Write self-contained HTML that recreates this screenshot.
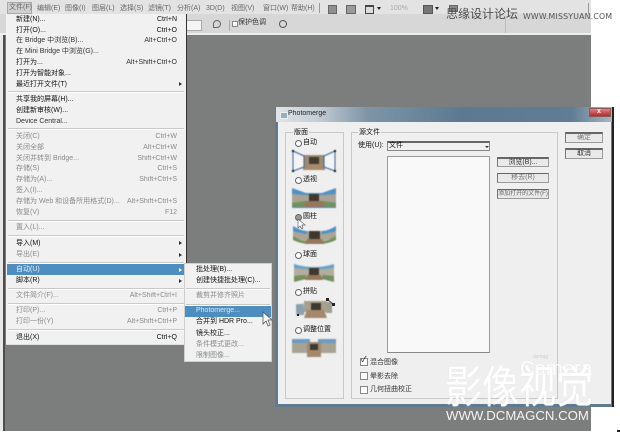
<!DOCTYPE html>
<html><head><meta charset="utf-8">
<style>
html,body{margin:0;padding:0;background:#fff}
#r{position:relative;width:620px;height:433px;overflow:hidden;background:#fff;font-family:"Liberation Sans","Noto Sans CJK SC",sans-serif;font-size:7px;color:#333}
#r div,#r span{position:absolute;white-space:nowrap}
.t{line-height:10px;height:10px;filter:blur(.35px)}
.k{text-align:right;width:90px;line-height:10px;height:10px;filter:blur(.35px)}
.g{color:#8a8a8a}
.b{color:#111}
.s{height:1px;background:#c9c9c9;border-bottom:1px solid #fff}
.m{color:#666;font-size:7px;line-height:10px;top:4px;filter:blur(.35px)}
.a{width:0;height:0;border-left:3px solid #333;border-top:2px solid transparent;border-bottom:2px solid transparent}
.r{width:5px;height:5px;border-radius:50%;border:1px solid #666;background:#fff}
.c{width:6px;height:6px;border:1px solid #888;background:#fff}
.p{border:1px solid #c8c8c8;background:#efeff0}
.bt{background:#e9e9e9;border:1px solid #9a9a9a;border-top:2px solid #666;border-left-color:#777;text-align:center;color:#555;line-height:8px;font-size:7px;box-sizing:border-box;filter:blur(.25px)}
.th{filter:blur(.4px)}
</style></head><body><div id="r">

<!-- app chrome -->
<div style="left:0;top:0;width:591px;height:431px;background:#7c7d7d"></div>
<div style="left:0;top:0;width:591px;height:14px;background:#e3e3e3"></div>
<div style="left:0;top:14px;width:591px;height:19px;background:#d7d7d7"></div>
<div style="left:0;top:33px;width:591px;height:2px;background:#eeeeee"></div>
<div style="left:0;top:35px;width:3px;height:396px;background:#e8e8e8"></div>
<div style="left:3px;top:35px;width:2px;height:396px;background:#4d4d4d"></div>

<div style="left:7px;top:2px;width:23px;height:10px;background:#d0d0d0;border:1px solid #a8a8a8"></div>
<span class="m" style="left:9px;top:3px">文件(F)</span>
<span class="m" style="left:37px">编辑(E)</span>
<span class="m" style="left:65px">图像(I)</span>
<span class="m" style="left:92px">图层(L)</span>
<span class="m" style="left:120px">选择(S)</span>
<span class="m" style="left:148px">滤镜(T)</span>
<span class="m" style="left:177px">分析(A)</span>
<span class="m" style="left:206px">3D(D)</span>
<span class="m" style="left:231px">视图(V)</span>
<span class="m" style="left:263px">窗口(W)</span>
<span class="m" style="left:291px">帮助(H)</span>

<div style="left:319px;top:3px;width:1px;height:10px;background:#999"></div>
<div style="left:328px;top:5px;width:7px;height:7px;background:#8f8f8f;border:1px solid #666"></div>
<div style="left:346px;top:5px;width:8px;height:7px;background:#9a9a9a;border:1px solid #666"></div>
<div style="left:365px;top:5px;width:7px;height:6px;background:#ddd;border:1px solid #444;border-top:2px solid #444"></div>
<div class="a" style="left:377px;top:7px;border:0;border-top:3px solid #222;border-left:2px solid transparent;border-right:2px solid transparent"></div>
<span class="m" style="left:390px;color:#aaa">100%</span>
<div style="left:423px;top:5px;width:8px;height:7px;background:#777;border:1px solid #555"></div>
<div class="a" style="left:435px;top:7px;border:0;border-top:3px solid #222;border-left:2px solid transparent;border-right:2px solid transparent"></div>
<div style="left:449px;top:5px;width:7px;height:5px;background:#888;border:1px solid #666"></div>
<div style="left:588px;top:3px;width:1px;height:11px;background:#999"></div>
<div style="left:505px;top:18px;width:1px;height:15px;background:#bbb"></div>

<div style="left:186px;top:20px;width:14px;height:9px;background:#f4f4f4;border:1px solid #aaa"></div>
<span style="left:213px;top:20px;width:6px;height:6px;border:1px solid #666;border-radius:50% 50% 50% 0"></span>
<div style="left:229px;top:20px;width:1px;height:11px;background:#aaa"></div>
<div class="c" style="left:232px;top:21px;width:4px;height:4px"></div>
<span class="m" style="left:238px;top:18px;color:#333">保护色调</span>
<span style="left:279px;top:20px;width:6px;height:6px;border:1px solid #555;border-radius:50%"></span>

<!-- file menu -->
<div style="left:6px;top:14px;width:181px;height:331px;background:#f1f1f1;border-right:1px solid #333;border-bottom:1px solid #ddd;box-sizing:border-box"></div>
<span class="t b" style="left:16px;top:15px">新建(N)...</span><span class="k b" style="left:87px;top:15px">Ctrl+N</span>
<span class="t b" style="left:16px;top:26px">打开(O)...</span><span class="k b" style="left:87px;top:26px">Ctrl+O</span>
<span class="t" style="left:16px;top:36px">在 Bridge 中浏览(B)...</span><span class="k" style="left:87px;top:36px">Alt+Ctrl+O</span>
<span class="t" style="left:16px;top:47px">在 Mini Bridge 中浏览(G)...</span>
<span class="t b" style="left:16px;top:58px">打开为...</span><span class="k" style="left:87px;top:58px">Alt+Shift+Ctrl+O</span>
<span class="t b" style="left:16px;top:69px">打开为智能对象...</span>
<span class="t b" style="left:16px;top:80px">最近打开文件(T)</span><div class="a" style="left:179px;top:82px"></div>
<div class="s" style="left:8px;top:91px;width:176px"></div>
<span class="t b" style="left:16px;top:95px">共享我的屏幕(H)...</span>
<span class="t b" style="left:16px;top:106px">创建新审核(W)...</span>
<span class="t" style="left:16px;top:117px">Device Central...</span>
<div class="s" style="left:8px;top:128px;width:176px"></div>
<span class="t g" style="left:16px;top:132px">关闭(C)</span><span class="k g" style="left:87px;top:132px">Ctrl+W</span>
<span class="t g" style="left:16px;top:143px">关闭全部</span><span class="k g" style="left:87px;top:143px">Alt+Ctrl+W</span>
<span class="t g" style="left:16px;top:154px">关闭并转到 Bridge...</span><span class="k g" style="left:87px;top:154px">Shift+Ctrl+W</span>
<span class="t g" style="left:16px;top:164px">存储(S)</span><span class="k g" style="left:87px;top:164px">Ctrl+S</span>
<span class="t g" style="left:16px;top:175px">存储为(A)...</span><span class="k g" style="left:87px;top:175px">Shift+Ctrl+S</span>
<span class="t g" style="left:16px;top:186px">签入(I)...</span>
<span class="t g" style="left:16px;top:197px">存储为 Web 和设备所用格式(D)...</span><span class="k g" style="left:87px;top:197px">Alt+Shift+Ctrl+S</span>
<span class="t g" style="left:16px;top:208px">恢复(V)</span><span class="k g" style="left:87px;top:208px">F12</span>
<div class="s" style="left:8px;top:220px;width:176px"></div>
<span class="t g" style="left:16px;top:223px">置入(L)...</span>
<div class="s" style="left:8px;top:235px;width:176px"></div>
<span class="t b" style="left:16px;top:239px">导入(M)</span><div class="a" style="left:179px;top:241px"></div>
<span class="t g" style="left:16px;top:250px">导出(E)</span><div class="a" style="left:179px;top:253px"></div>
<div class="s" style="left:8px;top:262px;width:176px"></div>
<div style="left:7px;top:264px;width:178px;height:11px;background:#4e8dc0"></div>
<span class="t" style="left:16px;top:265px;color:#e8f0f8">自动(U)</span><div class="a" style="left:179px;top:268px;border-left-color:#fff"></div>
<span class="t b" style="left:16px;top:276px">脚本(R)</span><div class="a" style="left:179px;top:279px"></div>
<div class="s" style="left:8px;top:288px;width:176px"></div>
<span class="t g" style="left:16px;top:291px">文件简介(F)...</span><span class="k g" style="left:87px;top:291px">Alt+Shift+Ctrl+I</span>
<div class="s" style="left:8px;top:303px;width:176px"></div>
<span class="t g" style="left:16px;top:306px">打印(P)...</span><span class="k g" style="left:87px;top:306px">Ctrl+P</span>
<span class="t g" style="left:16px;top:317px">打印一份(Y)</span><span class="k g" style="left:87px;top:317px">Alt+Shift+Ctrl+P</span>
<div class="s" style="left:8px;top:329px;width:176px"></div>
<span class="t b" style="left:16px;top:333px">退出(X)</span><span class="k b" style="left:87px;top:333px">Ctrl+Q</span>

<!-- submenu -->
<div style="left:184px;top:263px;width:88px;height:99px;background:#f1f1f1;border:1px solid #cfcfcf;box-sizing:border-box"></div>
<span class="t b" style="left:196px;top:265px">批处理(B)...</span>
<span class="t b" style="left:196px;top:276px">创建快捷批处理(C)...</span>
<div class="s" style="left:186px;top:288px;width:84px"></div>
<span class="t g" style="left:196px;top:291px">裁剪并修齐照片</span>
<div class="s" style="left:186px;top:304px;width:84px"></div>
<div style="left:185px;top:306px;width:86px;height:11px;background:#4e8dc0"></div>
<span class="t" style="left:196px;top:306px;color:#dde8f2">Photomerge...</span>
<span class="t b" style="left:196px;top:317px">合并到 HDR Pro...</span>
<span class="t b" style="left:196px;top:329px">镜头校正...</span>
<span class="t g" style="left:196px;top:340px">条件模式更改...</span>
<span class="t g" style="left:196px;top:351px">限制图像...</span>
<svg style="position:absolute;left:261px;top:311px" width="13" height="17" viewBox="0 0 13 17"><path d="M2 1L2 13L5 10L7 15L9 14L7 9L11 9Z" fill="#fff" stroke="#555" stroke-width=".8"/></svg>

<!-- dialog -->
<div style="left:275px;top:107px;width:339px;height:300px;background:#5f7b91;border-right:2px solid #222;box-sizing:border-box"></div>
<div style="left:276px;top:107px;width:336px;height:15px;background:linear-gradient(90deg,#dfe4e8 0,#c5ced6 12%,#7f95a7 27%,#5b7a92 55%,#5f7d95 88%,#a9b7c2 100%)"></div>
<div style="left:280px;top:112px;width:6px;height:5px;background:#8fb0c8;border:1px solid #eee"></div>
<span class="t" style="left:288px;top:109px;color:#222">Photomerge</span>
<div style="left:589px;top:108px;width:22px;height:9px;background:linear-gradient(#e08080,#b8282c);border:1px solid #8a5a5a;box-sizing:border-box"></div>
<span class="t" style="left:597px;top:107px;color:#fff;font-weight:bold">x</span>
<div style="left:278px;top:122px;width:333px;height:282px;background:#efeff0"></div>

<div class="p" style="left:285px;top:132px;width:57px;height:265px"></div>
<span class="t b" style="left:293px;top:128px;background:#efeff0;padding:0 1px">版面</span>
<div class="p" style="left:351px;top:132px;width:205px;height:265px"></div>
<span class="t b" style="left:358px;top:128px;background:#efeff0;padding:0 1px">源文件</span>
<span class="t b" style="left:358px;top:141px">使用(U):</span>

<div class="r" style="left:295px;top:140px"></div><span class="t b" style="left:303px;top:138px">自动</span>
<div class="r" style="left:295px;top:177px"></div><span class="t b" style="left:303px;top:175px">透视</span>
<div class="r" style="left:295px;top:214px;background:#999"></div><span class="t b" style="left:303px;top:212px">圆柱</span>
<div class="r" style="left:295px;top:252px"></div><span class="t b" style="left:303px;top:250px">球面</span>
<div class="r" style="left:295px;top:289px"></div><span class="t b" style="left:303px;top:287px">拼贴</span>
<div class="r" style="left:295px;top:327px"></div><span class="t b" style="left:303px;top:325px">调整位置</span>

<svg class="th" style="position:absolute;left:291px;top:150px" width="48" height="22" viewBox="0 0 48 22">
<path d="M12 5H34V20H12Z" fill="#9d8b70"/><path d="M18 7H28V14H18Z" fill="#443c30"/><path d="M16 14H30L33 20H13Z" fill="#a8896c"/>
<path d="M2 1L13 6V17L2 21Z" fill="#f4f4f6" stroke="#3b5f98"/><path d="M44 1L33 6V17L44 21Z" fill="#f4f4f6" stroke="#3b5f98"/>
<path d="M1 0h2v2h-2zM1 20h2v2h-2zM43 0h2v2h-2zM43 20h2v2h-2z" fill="#111"/></svg>

<svg class="th" style="position:absolute;left:292px;top:188px" width="44" height="20" viewBox="0 0 44 20">
<path d="M0 0L14 5H30L44 0V20H0Z" fill="#4f92c8"/><path d="M0 6L14 7H30L44 6V15L30 13H14L0 15Z" fill="#a8a392"/><path d="M0 15L14 13V19H0ZM44 15L30 13V19H44Z" fill="#74905c"/>
<path d="M17 6H27V13H17Z" fill="#3f382e"/><path d="M14 13H30L33 19H11Z" fill="#97775c"/></svg>

<svg class="th" style="position:absolute;left:293px;top:225px" width="43" height="20" viewBox="0 0 43 20">
<path d="M0 3Q21 10 43 3V12Q21 21 0 12Z" fill="#aaa594"/><path d="M0 1Q8 6 14 6V9Q6 8 0 6ZM43 1Q35 6 29 6V9Q37 8 43 6Z" fill="#4f92c8"/>
<path d="M0 11Q8 16 14 16V19Q6 18 0 15ZM43 11Q35 16 29 16V19Q37 18 43 15Z" fill="#74905c"/>
<path d="M16 6H27V14H16Z" fill="#3f382e"/><path d="M14 14H29L31 19H12Z" fill="#97775c"/></svg>
<svg style="position:absolute;left:297px;top:218px" width="9" height="12" viewBox="0 0 9 12"><path d="M1 1V10L3 8L5 11L6 10L5 7H8Z" fill="#fff" stroke="#666" stroke-width=".7"/></svg>

<svg class="th" style="position:absolute;left:294px;top:263px" width="40" height="19" viewBox="0 0 40 19">
<path d="M0 1Q20 7 40 1V6Q20 8 0 6Z" fill="#6aa2cc"/><path d="M0 5Q20 8 40 5V14Q20 11 0 14Z" fill="#b2ad9c"/><path d="M0 13Q8 12 12 12V16L0 19ZM40 13Q32 12 28 12V16L40 19Z" fill="#74905c"/>
<path d="M15 5H25V12H15Z" fill="#3f382e"/><path d="M13 12H27L29 17H11Z" fill="#97775c"/></svg>

<svg class="th" style="position:absolute;left:296px;top:300px" width="38" height="19" viewBox="0 0 38 19">
<path d="M0 4H8V15H0Z" fill="#8aa0aa" transform="rotate(-4 4 10)"/><path d="M30 2H36V13H30Z" fill="#9a9e94"/>
<path d="M8 1H31V12H8Z" fill="#a89f8c"/><path d="M15 3H25V10H15Z" fill="#3f382e"/><path d="M11 10H28L31 18H8Z" fill="#a5876b"/></svg>
<svg style="position:absolute;left:326px;top:298px" width="10" height="9" viewBox="0 0 10 9"><path d="M1 1L8 7" stroke="#444" stroke-width="1"/><path d="M0 0h3v3h-3zM6 5h3v3h-3z" fill="#222"/></svg>
<div style="left:297px;top:314px;width:2px;height:2px;background:#222"></div>

<svg class="th" style="position:absolute;left:292px;top:339px" width="44" height="18" viewBox="0 0 44 18">
<path d="M0 0H18V14H0ZM26 0H44V14H26Z" fill="#6c9cc4"/><path d="M0 4H18V14H0ZM26 4H44V14H26Z" fill="#a7a291"/>
<path d="M15 3H29V18H15Z" fill="#a08a70"/><path d="M18 5H26V11H18Z" fill="#3f382e"/><path d="M15 11H29V18H15Z" fill="#a5876b"/></svg>

<!-- source -->
<div style="left:387px;top:141px;width:103px;height:10px;background:#f0f0f0;border:1px solid #888;border-top:2px solid #666;box-sizing:border-box"></div>
<span class="t b" style="left:389px;top:141px">文件</span>
<div style="left:485px;top:146px;width:0;height:0;border-top:2px solid #333;border-left:2px solid transparent;border-right:2px solid transparent"></div>
<div style="left:387px;top:156px;width:103px;height:197px;background:#faf9fa;border:1px solid #9a9a9a;border-bottom:1px solid #888;box-sizing:border-box"></div>
<div class="bt" style="left:497px;top:157px;width:52px;height:10px;color:#333">浏览(B)...</div>
<div class="bt" style="left:497px;top:173px;width:52px;height:10px;color:#777;border-top-width:1px;line-height:8px">移去(R)</div>
<div class="bt" style="left:497px;top:189px;width:52px;height:10px;color:#666;border-top-width:1px;line-height:8px;font-size:6px">添加打开的文件(F)</div>
<div class="bt" style="left:565px;top:132px;width:38px;height:11px;color:#777">确定</div>
<div class="bt" style="left:565px;top:148px;width:38px;height:11px;color:#333">取消</div>

<div class="c" style="left:360px;top:358px"></div><span class="t b" style="left:361px;top:355px;font-size:8px">✓</span><span class="t" style="left:370px;top:358px">混合图像</span>
<div class="c" style="left:360px;top:372px"></div><span class="t" style="left:370px;top:372px">晕影去除</span>
<div class="c" style="left:360px;top:386px"></div><span class="t" style="left:370px;top:385px">几何扭曲校正</span>

<!-- watermarks -->
<span style="left:446px;top:6px;font-size:12px;line-height:16px;color:#4c4c4c">思缘设计论坛</span>
<span style="left:523px;top:12px;font-family:'DejaVu Sans',sans-serif;font-size:7.8px;line-height:10px;color:#555;letter-spacing:.2px">WWW.MISSYUAN.COM</span>
<span style="left:520px;top:358px;font-size:20px;line-height:22px;color:#fff;letter-spacing:.2px;text-shadow:0 0 1px #ddd">Camera</span>
<span style="left:533px;top:354px;font-size:5px;line-height:6px;color:#ccc">dcmag</span>
<span style="left:445px;top:363px;font-size:37px;line-height:50px;color:#fff;transform:scaleY(1.2);transform-origin:50% 50%;text-shadow:0 0 1px #e4e4e4">影像视觉</span>
<span style="left:446px;top:408px;font-size:13.2px;line-height:16px;color:#f4f4f4">WWW.DCMAGCN.COM</span>
<div style="left:617px;top:430px;width:3px;height:2px;background:#222"></div>
</div></body></html>
